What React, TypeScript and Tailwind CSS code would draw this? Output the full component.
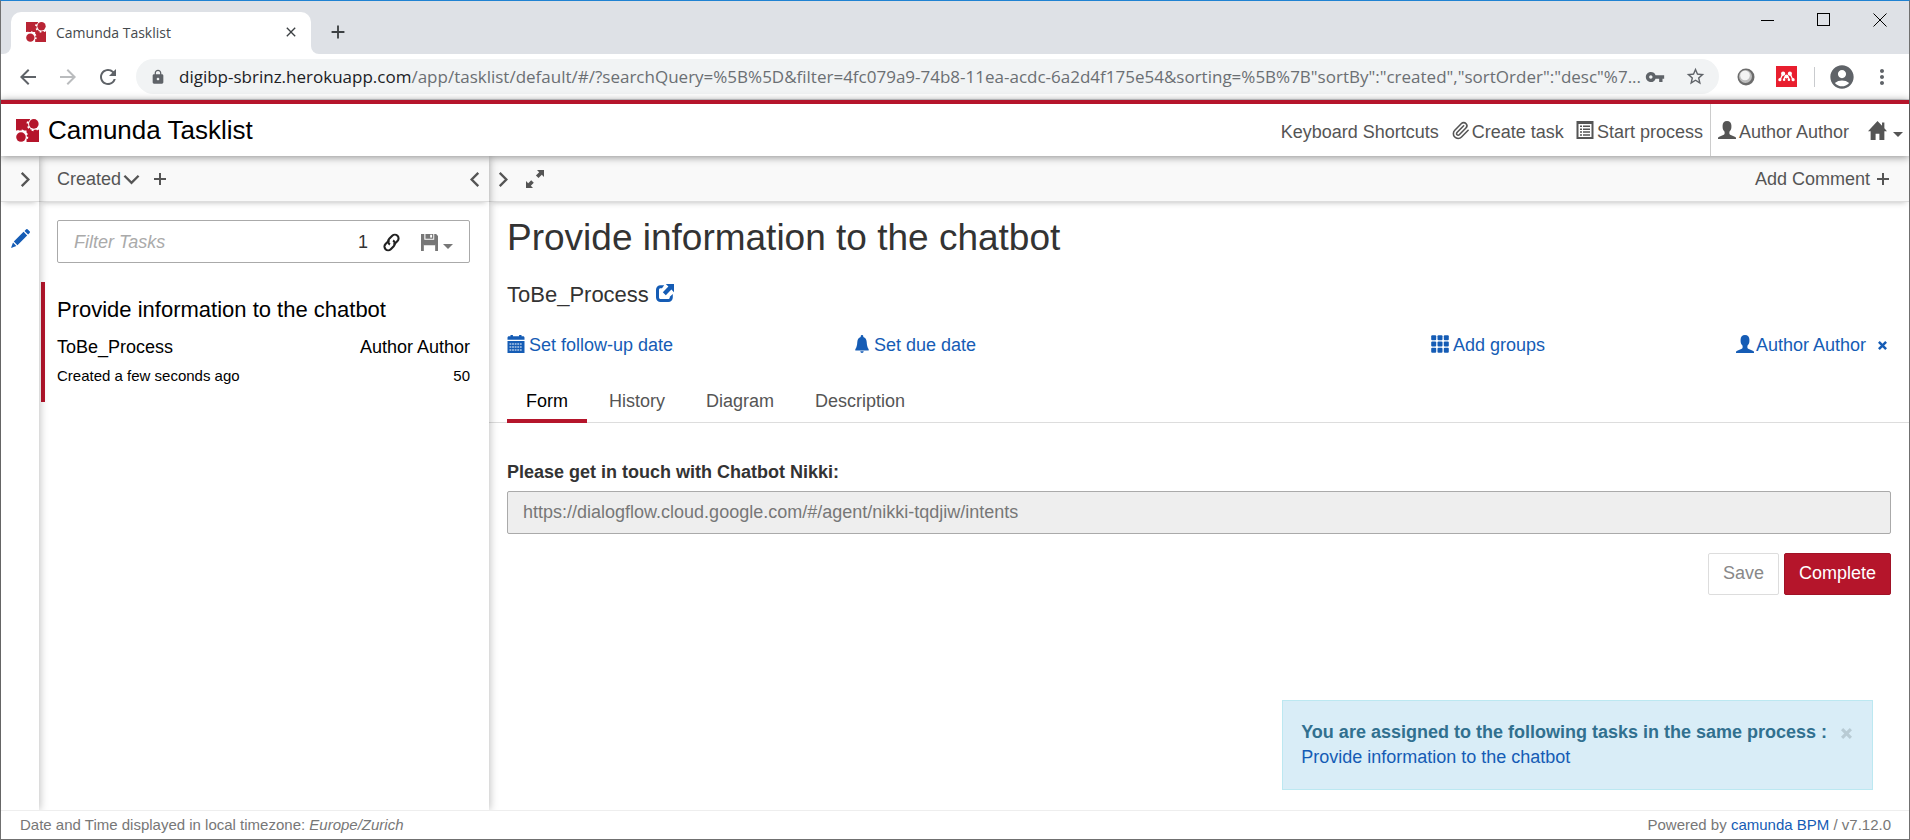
import type { ReactNode } from "react";
import {
  MdAccountCircle,
  MdAdd,
  MdArrowBack,
  MdArrowForward,
  MdClose,
  MdLock,
  MdMoreVert,
  MdRefresh,
  MdStarOutline,
  MdVpnKey,
} from "react-icons/md";
import { Paperclip } from "lucide-react";

type IconProps = { className?: string };

function CamundaLogo({ className }: IconProps) {
  return (
    <svg viewBox="0 0 24 24" className={className} fill="currentColor" aria-hidden="true">
      <rect x="0" y="0" width="15" height="12" />
      <rect x="11" y="11" width="13" height="13" />
      <circle cx="18.6" cy="5.2" r="6" fill="white" />
      <circle cx="18.6" cy="5.2" r="6.5" fill="none" stroke="white" strokeWidth="2.2" strokeDasharray="2 3.1" />
      <circle cx="5.2" cy="18.6" r="6" fill="white" />
      <circle cx="5.2" cy="18.6" r="6.5" fill="none" stroke="white" strokeWidth="2.2" strokeDasharray="2 3.1" />
      <circle cx="18.6" cy="5.1" r="5" />
      <circle cx="5.2" cy="18.8" r="5" />
    </svg>
  );
}

function Glyph({ className, children }: { className?: string; children: ReactNode }) {
  return (
    <svg viewBox="0 0 18 18" className={`shrink-0 ${className ?? ""}`} fill="currentColor" aria-hidden="true">
      {children}
    </svg>
  );
}

const UserIcon = ({ className }: IconProps) => (
  <Glyph className={className}>
    <path d="M9 0C6.2 0 4.6 1.8 4.6 4.5v1.8c0 1.7.8 3.4 2 4.5v1.7c0 .6-.3.9-.8 1.2l-4.6 2c-.7.3-1.2.7-1.2 1.3v1h18v-1c0-.6-.5-1-1.2-1.3l-4.6-2c-.5-.3-.8-.6-.8-1.2v-1.7c1.200-1.100 2-2.800 2-4.500V4.500C13.400 1.800 11.800 0 9 0z" />
  </Glyph>
);

const HomeIcon = ({ className }: IconProps) => (
  <Glyph className={className}>
    <path d="M9 0 0 9.600h2.500V18h4.700v-6h3.600v6h4.700V9.600H18l-2.500-2.700V1.500h-2.200v3z" />
  </Glyph>
);

const ListIcon = ({ className }: IconProps) => (
  <Glyph className={className}>
    <path fillRule="evenodd" d="M.5 0h17v18H.5zM2.500 3v13h13V3z" />
    <path d="M4 4.500h2V6H4zM7 4.500h7V6H7zM4 7.500h2V9H4zM7 7.500h7V9H7zM4 10.300h2v1.500H4zM7 10.300h7v1.500H7zM4 13.200h2v1.500H4zM7 13.200h7v1.500H7z" />
  </Glyph>
);

const PencilIcon = ({ className }: IconProps) => (
  <Glyph className={className}>
    <path d="M14.200.4a1.200 1.200 0 0 1 1.700 0l1.700 1.700a1.200 1.200 0 0 1 0 1.700L16.200 5.200 12.800 1.800zM11.900 2.700l3.400 3.400-9.200 9.200-3.400-3.400zM1.900 12.900l3.200 3.200L0 18z" />
  </Glyph>
);

const ChainIcon = ({ className }: IconProps) => (
  <Glyph className={className}>
    <g transform="rotate(-45 9 9)" fill="none" stroke="currentColor" strokeWidth="2">
      <path d="M9 12h5a3.500 3.500 0 0 0 0-7H10a3.500 3.500 0 0 0-3.400 4.300" />
      <path d="M9 6H4a3.500 3.500 0 0 0 0 7h4a3.500 3.500 0 0 0 3.400-4.300" />
    </g>
  </Glyph>
);

const FloppyIcon = ({ className }: IconProps) => (
  <Glyph className={className}>
    <path d="M0 0h3.500v6h10.500V0h2l2 2v16h-3v-7H3v7H0z" />
    <path d="M4.700 0h8.300v5H4.700zM3 7h12v5H3z" />
    <path d="M9.700.8h2v3h-2z" fill="white" />
  </Glyph>
);

const ResizeIcon = ({ className }: IconProps) => (
  <Glyph className={className}>
    <path d="M11 0h7v7l-2.200-2.200-3.300 3.300-2.600-2.600 3.300-3.300zM0 18v-7l2.200 2.200 3-3 2.600 2.600-3 3L7 18z" />
  </Glyph>
);

const ShareIcon = ({ className }: IconProps) => (
  <Glyph className={className}>
    <path d="M8.200 1.200H4.500A4.500 4.500 0 0 0 0 5.700v7.800A4.500 4.500 0 0 0 4.500 18h7.800a4.500 4.500 0 0 0 4.500-4.500V10l-3 2.800v.7c0 .8-.7 1.500-1.500 1.500H4.500c-.8 0-1.500-.7-1.500-1.500V5.700c0-.8.7-1.500 1.500-1.500H6z" />
    <path d="M9.800 0H18v8.200l-2.600-2.600-5.600 5.600-3-3 5.600-5.600z" />
  </Glyph>
);

const CalendarIcon = ({ className }: IconProps) => (
  <Glyph className={className}>
    <path d="M2 1.200h1.500V0h2.400v1.200h6.200V0h2.400v1.200H16c1 0 1.500.6 1.500 1.600v2H.5v-2c0-1 .5-1.600 1.500-1.600z" />
    <path d="M.5 6h17v12H.5z" />
    <path d="M2.500 9h13M2.500 12h13M2.500 15h13" stroke="white" strokeWidth="1" strokeDasharray="1.800 .8" />
  </Glyph>
);

const BellIcon = ({ className }: IconProps) => (
  <Glyph className={className}>
    <path d="M9 0c.8 0 1.300.6 1.300 1.400v.5c2.200.7 3.200 2.500 3.400 5 .2 3.100.6 5 2 7.300v1.300H2.300v-1.300C3.700 11.900 4.100 10 4.300 6.900c.2-2.500 1.200-4.300 3.400-5v-.5C7.700.6 8.200 0 9 0zM7.300 16.300h3.400C10.600 17.400 9.900 18 9 18s-1.600-.6-1.700-1.700z" />
  </Glyph>
);

const gridStops = [0.2, 6.5, 12.8];

const GridIcon = ({ className }: IconProps) => (
  <Glyph className={className}>
    {gridStops.flatMap((y) =>
      gridStops.map((x) => <rect key={`${x}-${y}`} x={x} y={y} width="5" height="5" rx="1" />),
    )}
  </Glyph>
);

function Chevron({ className, points }: { className?: string; points: string }) {
  return (
    <svg viewBox="0 0 18 18" className={`shrink-0 ${className ?? ""}`} fill="none" stroke="currentColor" strokeWidth="2.500" aria-hidden="true">
      <polyline points={points} />
    </svg>
  );
}

const RIGHT = "5,2 12,9 5,16";
const LEFT = "13,2 6,9 13,16";
const DOWN = "1.500,5 9,12.500 16.500,5";

function Plus({ className }: IconProps) {
  return (
    <svg viewBox="0 0 12 12" className={`shrink-0 ${className ?? ""}`} stroke="currentColor" strokeWidth="2" aria-hidden="true">
      <path d="M6 0v12M0 6h12" />
    </svg>
  );
}

function Caret({ className }: IconProps) {
  return (
    <svg viewBox="0 0 10 5" className={`shrink-0 ${className ?? ""}`} fill="currentColor" aria-hidden="true">
      <path d="M0 0h10L5 5z" />
    </svg>
  );
}

function Cross({ className }: IconProps) {
  return (
    <svg viewBox="0 0 10 10" className={`shrink-0 ${className ?? ""}`} stroke="currentColor" strokeWidth="2.800" aria-hidden="true">
      <path d="M1 1l8 8M9 1L1 9" />
    </svg>
  );
}

function TabStrip() {
  return (
    <div className="flex h-[53px] justify-between bg-[#dee1e6]">
      <div className="flex">
        <div className="flex w-[10px] items-end bg-white">
          <div className="h-full w-full rounded-br-lg bg-[#dee1e6]" />
        </div>
        <div className="mt-[11px] flex w-[300px] items-center rounded-t-[10px] bg-white pr-3 pb-[2px] pl-[15px]">
          <CamundaLogo className="size-5 text-[#b92434]" />
          <span className="ml-[10px] flex-1 text-[14px] text-[#45494d]">Camunda Tasklist</span>
          <button type="button" aria-label="Close tab" className="text-[#3c4043]">
            <MdClose className="size-4" />
          </button>
        </div>
        <div className="flex w-[10px] bg-white">
          <div className="h-full w-full rounded-bl-lg bg-[#dee1e6]" />
        </div>
        <button type="button" aria-label="New tab" className="mt-[11px] mb-[2px] ml-[6px] flex items-center text-[#3c4043]">
          <MdAdd className="size-[22px]" />
        </button>
      </div>
      <div className="flex h-[38px] items-center gap-[42px] pr-[22px] text-black">
        <button type="button" aria-label="Minimize">
          <svg viewBox="0 0 14 14" className="size-[14px]" stroke="currentColor">
            <path d="M0 7.500h13" />
          </svg>
        </button>
        <button type="button" aria-label="Maximize">
          <svg viewBox="0 0 14 14" className="size-[14px]" fill="none" stroke="currentColor">
            <rect x=".5" y=".5" width="12" height="12" />
          </svg>
        </button>
        <button type="button" aria-label="Close">
          <svg viewBox="0 0 14 14" className="size-[14px]" stroke="currentColor">
            <path d="M.5.5l13 13M13.500.5l-13 13" />
          </svg>
        </button>
      </div>
    </div>
  );
}

function AddressBar() {
  return (
    <div className="flex h-[46px] items-center border-b border-[#d5d7da] bg-white pr-[15px] pl-[15px] text-[#5f6368]">
      <button type="button" aria-label="Back">
        <MdArrowBack className="size-6" />
      </button>
      <button type="button" aria-label="Forward" className="ml-4 text-[#babcbe]">
        <MdArrowForward className="size-6" />
      </button>
      <button type="button" aria-label="Reload" className="ml-4">
        <MdRefresh className="size-6" />
      </button>
      <div className="ml-4 flex h-[35px] min-w-0 flex-1 items-center rounded-full bg-[#f1f3f4] pr-[13px] pl-[14px]">
        <MdLock className="size-4 shrink-0" />
        <div className="ml-[13px] min-w-0 flex-1 whitespace-nowrap text-[17px] leading-6 text-[#6b6f73]">
          <span className="text-[#202124]">digibp-sbrinz.herokuapp.com</span>
          /app/tasklist/default/#/?searchQuery=%5B%5D&amp;filter=4fc079a9-74b8-11ea-acdc-6a2d4f175e54&amp;sorting=%5B%7B"sortBy":"created","sortOrder":"desc"%7...
        </div>
        <button type="button" aria-label="Saved passwords" className="ml-1">
          <MdVpnKey className="size-5" />
        </button>
        <button type="button" aria-label="Bookmark" className="ml-5">
          <MdStarOutline className="size-[21px]" />
        </button>
      </div>
      <svg viewBox="0 0 18 18" className="ml-[18px] size-[18px]" aria-hidden="true">
        <circle cx="9" cy="9" r="8.500" fill="#6c6c6c" />
        <circle cx="8.500" cy="8.500" r="6.500" fill="#bdbdbd" />
        <circle cx="8" cy="7.500" r="4.800" fill="#f3f3f3" />
      </svg>
      <svg viewBox="0 0 20 20" className="ml-[21px] size-[21px]" aria-hidden="true">
        <rect width="20" height="20" fill="#e81e2e" />
        <g fill="white">
          <circle cx="6.800" cy="7.300" r="2" />
          <circle cx="13.200" cy="7.300" r="2" />
          <circle cx="10" cy="10" r="1.800" />
          <circle cx="3.700" cy="13" r="1.500" />
          <circle cx="16.300" cy="13" r="1.500" />
          <circle cx="7.700" cy="13.200" r="1.200" />
          <circle cx="12.300" cy="13.200" r="1.200" />
        </g>
        <path d="M3.700 13c1.500-.8.800-3.300 3-4.800M16.300 13c-1.500-.8-.8-3.300-3-4.800M7.700 13c.3-1 .3-2 .8-3M12.300 13c-.3-1-.3-2-.8-3" fill="none" stroke="white" strokeWidth="1.200" />
      </svg>
      <span className="ml-[17px] h-5 w-px bg-[#c9cbce]" />
      <button type="button" aria-label="Profile" className="ml-[13px]">
        <MdAccountCircle className="size-7" />
      </button>
      <button type="button" aria-label="Browser menu" className="ml-[14px]">
        <MdMoreVert className="size-6" />
      </button>
    </div>
  );
}

function AppHeader() {
  return (
    <header className="relative z-30 flex h-14 items-stretch justify-between border-t-4 border-[#b5152b] bg-white shadow-[0_1px_8px_rgba(0,0,0,0.45)]">
      <a href="#/" className="flex items-center gap-[9px] pl-[15px] text-[26px] text-black">
        <CamundaLogo className="size-[23px] text-[#b5152b]" />
        Camunda Tasklist
      </a>
      <nav className="flex items-stretch text-[#555]">
        <div className="flex items-center gap-3 pt-1 pr-[7px]">
          <a href="#shortcuts">Keyboard Shortcuts</a>
          <a href="#create" className="flex items-center gap-[2px]">
            <Paperclip className="mb-1 size-[19px]" strokeWidth={2} />
            Create task
          </a>
          <a href="#start" className="flex items-center gap-[3px]">
            <ListIcon className="mb-1 size-[18px]" />
            Start process
          </a>
        </div>
        <div className="flex items-center border-l border-[#ccc] pt-1 pr-[6px] pl-[7px]">
          <a href="#account" className="flex items-center gap-[3px]">
            <UserIcon className="mb-1 size-[18px]" />
            Author Author
          </a>
          <button type="button" aria-label="Apps" className="ml-[19px] flex items-center gap-[6px]">
            <HomeIcon className="mb-1 size-[19px]" />
            <Caret className="mt-1 w-[10px]" />
          </button>
        </div>
      </nav>
    </header>
  );
}

function ColumnBar({ className, children }: { className?: string; children: ReactNode }) {
  return (
    <div className={`flex h-[46px] items-center border-b border-[#ddd] bg-[#f9f9f9] pt-px text-[#555] shadow-[0_3px_6px_-3px_rgba(0,0,0,0.3)] ${className ?? ""}`}>
      {children}
    </div>
  );
}

function FilterColumn() {
  return (
    <aside className="relative z-20 w-[38px] shrink-0 bg-white shadow-[1px_0_8px_rgba(0,0,0,0.25)]">
      <ColumnBar className="justify-end pr-[5px]">
        <button type="button" aria-label="Expand filters">
          <Chevron className="size-[17px]" points={RIGHT} />
        </button>
      </ColumnBar>
      <button type="button" aria-label="Edit filter" className="mt-[27px] ml-[10px] block text-[#155cb5]">
        <PencilIcon className="size-[19px]" />
      </button>
    </aside>
  );
}

function TaskColumn() {
  return (
    <section className="relative z-10 w-[450px] shrink-0 bg-white shadow-[1px_0_8px_rgba(0,0,0,0.25)]">
      <ColumnBar className="pr-[6px] pl-[18px]">
        <button type="button" className="flex items-center gap-[2px]">
          Created
          <Chevron className="size-[17px]" points={DOWN} />
        </button>
        <button type="button" aria-label="Add sorting" className="ml-[14px]">
          <Plus className="size-3" />
        </button>
        <button type="button" aria-label="Collapse tasks" className="ml-auto">
          <Chevron className="size-[17px]" points={LEFT} />
        </button>
      </ColumnBar>
      <div className="mt-[18px] mr-[19px] ml-[18px] flex h-[43px] items-center rounded-[2px] border border-[#aaa] px-4 pt-[2px]">
        <input
          type="text"
          aria-label="Filter Tasks"
          placeholder="Filter Tasks"
          className="min-w-0 flex-1 outline-none placeholder:text-[#aaa] placeholder:italic"
        />
        <span className="text-[#333]">1</span>
        <button type="button" aria-label="Copy link" className="ml-[14px] text-[#222]">
          <ChainIcon className="size-[19px]" />
        </button>
        <button type="button" aria-label="Save filter" className="ml-5 flex items-center gap-[5px] text-[#777]">
          <FloppyIcon className="size-[17px]" />
          <Caret className="mt-2 w-[10px]" />
        </button>
      </div>
      <ul className="mt-[19px] ml-[2px]">
        <li className="border-l-4 border-[#b5152b] pt-3 pr-[19px] pb-[15px] pl-3 text-black">
          <a href="#task" className="block text-[22px] leading-8">Provide information to the chatbot</a>
          <div className="mt-[9px] flex justify-between leading-6">
            <span>ToBe_Process</span>
            <span>Author Author</span>
          </div>
          <div className="mt-[6px] flex justify-between text-[15px] leading-[22px]">
            <span>Created a few seconds ago</span>
            <span>50</span>
          </div>
        </li>
      </ul>
    </section>
  );
}

const tabs = ["Form", "History", "Diagram", "Description"];

function TaskView() {
  return (
    <main className="relative flex min-w-0 flex-1 flex-col bg-white text-[#333]">
      <ColumnBar className="pr-5 pl-[6px]">
        <button type="button" aria-label="Collapse task">
          <Chevron className="size-[17px]" points={RIGHT} />
        </button>
        <button type="button" aria-label="Full screen" className="ml-[14px]">
          <ResizeIcon className="size-[18px]" />
        </button>
        <button type="button" className="ml-auto flex items-center gap-[7px]">
          Add Comment
          <Plus className="size-3" />
        </button>
      </ColumnBar>

      <div className="px-[18px] pt-3">
        <h1 className="text-[37px] leading-[48px]">Provide information to the chatbot</h1>
        <h2 className="mt-[17px] flex items-center gap-[7px] text-[22px] leading-8">
          ToBe_Process
          <a href="#process" aria-label="Open process" className="mb-1">
            <ShareIcon className="size-[18px] text-[#155cb5]" />
          </a>
        </h2>
        <div className="mt-[22px] grid grid-cols-4 leading-6 text-[#155cb5]">
          <button type="button" className="flex items-center gap-1">
            <CalendarIcon className="mb-[3px] size-[18px]" />
            Set follow-up date
          </button>
          <button type="button" className="flex items-center gap-[3px]">
            <BellIcon className="mb-[3px] size-[18px]" />
            Set due date
          </button>
          <button type="button" className="flex items-center justify-end gap-1">
            <GridIcon className="mb-[3px] size-[18px]" />
            Add groups
          </button>
          <div className="flex items-center justify-end">
            <button type="button" className="flex items-center gap-[2px]">
              <UserIcon className="mb-[3px] size-[18px]" />
              Author Author
            </button>
            <button type="button" aria-label="Remove assignee" className="mr-1 ml-3">
              <Cross className="size-[9px]" />
            </button>
          </div>
        </div>
      </div>

      <div role="tablist" className="mt-[21px] flex gap-[3px] border-b border-[#ddd] px-[18px] text-[#555]">
        {tabs.map((tab, i) => (
          <button
            key={tab}
            type="button"
            role="tab"
            aria-selected={i === 0}
            className={
              i === 0
                ? "-mb-px h-[45px] border-b-4 border-[#b5152b] px-[19px] pt-[6px] text-black"
                : "h-11 px-[19px] pt-[6px] pb-1"
            }
          >
            {tab}
          </button>
        ))}
      </div>

      <form className="px-[18px] pt-[37px]" onSubmit={(e) => e.preventDefault()}>
        <label htmlFor="chatbot-url" className="block leading-6 font-bold">
          Please get in touch with Chatbot Nikki:
        </label>
        <input
          id="chatbot-url"
          type="text"
          readOnly
          value="https://dialogflow.cloud.google.com/#/agent/nikki-tqdjiw/intents"
          className="mt-[7px] block h-[43px] w-full rounded-[2px] border border-[#aaa] bg-[#eee] px-[15px] text-[#777] outline-none"
        />
        <div className="mt-[19px] flex justify-end gap-[5px]">
          <button type="button" className="h-[42px] rounded-[2px] border border-[#ddd] px-[14px] pb-[2px] text-[#888]">
            Save
          </button>
          <button type="submit" className="h-[42px] rounded-[2px] border border-[#a01226] bg-[#b5152b] px-[14px] pb-[2px] text-white">
            Complete
          </button>
        </div>
      </form>

      <div className="mt-auto mr-9 mb-5 flex items-start gap-[14px] self-end border border-[#bce8f1] bg-[#d9edf7] py-[19px] pr-5 pl-[18px] leading-[25px]">
        <div>
          <strong className="block text-[#31708f]">You are assigned to the following tasks in the same process :</strong>
          <a href="#task" className="text-[#155cb5]">Provide information to the chatbot</a>
        </div>
        <button type="button" aria-label="Dismiss" className="mt-2 text-[#b8cbd4]">
          <Cross className="size-[11px]" />
        </button>
      </div>
    </main>
  );
}

export default function App() {
  return (
    <div className="flex min-h-screen flex-col border border-[#707070] border-t-[#1f82d2] bg-white">
      <div className="font-['Open_Sans',sans-serif]">
        <TabStrip />
        <AddressBar />
      </div>
      <div className="flex flex-1 flex-col font-['Liberation_Sans',Arial,sans-serif] text-[18px]">
        <AppHeader />
        <div className="flex flex-1">
          <FilterColumn />
          <TaskColumn />
          <TaskView />
        </div>
        <footer className="relative z-30 flex h-[29px] items-center justify-between border-t border-[#eee] bg-white pr-[18px] pl-[19px] text-[15px] text-[#777]">
          <p>
            Date and Time displayed in local timezone: <em>Europe/Zurich</em>
          </p>
          <p>
            Powered by <a href="#camunda" className="text-[#155cb5]">camunda BPM</a> / v7.12.0
          </p>
        </footer>
      </div>
    </div>
  );
}
